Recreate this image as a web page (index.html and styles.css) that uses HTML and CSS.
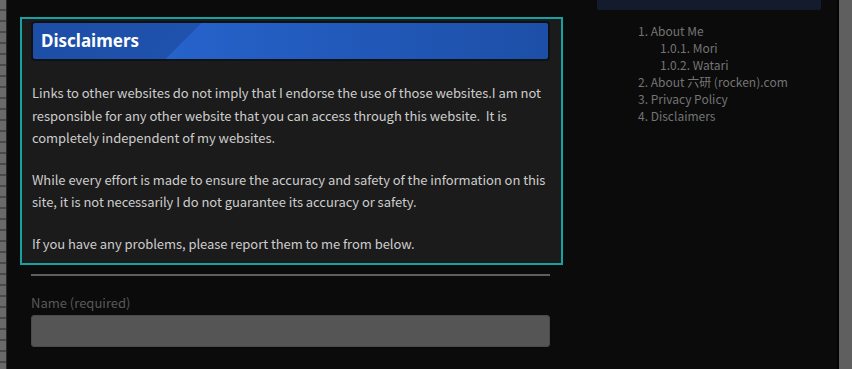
FILE: index.html
```html
<!DOCTYPE html>
<html lang="en">
<head>
  <meta charset="UTF-8" />
  <meta name="viewport" content="width=device-width, initial-scale=1.0" />
  <title>Disclaimers</title>
  <link rel="stylesheet" href="styles.css">
</head>
<body>
  <div class="edge-left"></div>
  <div class="main">
    <section class="notice">
      <h2 class="notice-title">Disclaimers</h2>
      <p>Links to other websites do not imply that I endorse the use of those websites.I am not responsible for any other website that you can access through this website.&nbsp; It is completely independent of my websites.</p>
      <p>While every effort is made to ensure the accuracy and safety of the information on this site, it is not necessarily I do not guarantee its accuracy or safety.</p>
      <p>If you have any problems, please report them to me from below.</p>
    </section>
    <div class="comment-form">
      <hr />
      <label for="author">Name (required)</label>
      <input type="text" id="author" />
    </div>
  </div>
  <div class="sidebar">
    <div class="widget-end"></div>
    <ol class="toc">
      <li>1. About Me
        <ol>
          <li>1.0.1. Mori</li>
          <li>1.0.2. Watari</li>
        </ol>
      </li>
      <li>2. About 六研 (rocken).com</li>
      <li>3. Privacy Policy</li>
      <li>4. Disclaimers</li>
    </ol>
  </div>
  <div class="edge-right"></div>
</body>
</html>
```

FILE: styles.css
```css
html, body {
  height: 100%;
}
body {
  margin: 0;
  background: #0b0b0b;
  font-family: "Noto Sans CJK JP", "Noto Sans", sans-serif;
  display: flex;
  overflow: hidden;
}
.edge-left {
  width: 6px;
  flex-shrink: 0;
  background: repeating-linear-gradient(to bottom, #6a6a6a 0, #6a6a6a 9px, #4a4a4a 9px, #4a4a4a 11px);
  border-right: 1px solid #2a2a2a;
}
.main {
  width: 543px;
  flex-shrink: 0;
  padding: 17px 0 0 13px;
}
.notice {
  background: #1b1b1b;
  border: 2px solid #17a2a2;
  padding: 2px 11px 8px 9px;
  color: #cdcdcd;
  font-size: 13px;
  line-height: 22.5px;
  letter-spacing: -0.05px;
}
.notice-title {
  margin: 0 0 21px;
  height: 36px;
  line-height: 35px;
  padding: 0 8px;
  font-size: 17px;
  font-weight: bold;
  color: #fff;
  letter-spacing: 0;
  border: 2px solid #0e1116;
  border-radius: 4px;
  font-family: "Noto Sans", sans-serif;
  background:
    linear-gradient(135deg, #1d4ea6 0, #1f52ad 119px, transparent 119px),
    linear-gradient(90deg, #2869d6 0, #245fc4 40%, #1d4fa7 100%);
}
.notice p {
  margin: 0 0 19px;
  padding-left: 1px;
}
.notice p:last-child {
  margin-bottom: 0;
}
.comment-form {
  padding: 0 13px 0 11px;
}
.comment-form hr {
  border: none;
  border-top: 2px solid #5e5e5e;
  margin: 9px 0 18px;
}
.comment-form label {
  display: block;
  color: #595959;
  font-size: 13px;
  line-height: 18px;
  margin-bottom: 3px;
}
.comment-form input {
  display: block;
  width: 100%;
  box-sizing: border-box;
  height: 32px;
  border: 1px solid #4a4a4a;
  border-radius: 3px;
  background: #555;
}
.sidebar {
  width: 224px;
  flex-shrink: 0;
  margin-left: 34px;
}
.widget-end {
  height: 10px;
  background: #141b2c;
  border-radius: 0 0 2px 2px;
}
.toc {
  list-style: none;
  margin: 12px 0 0;
  padding: 0 0 0 41px;
  font-size: 12px;
  line-height: 17px;
  color: #747474;
}
.toc ol {
  list-style: none;
  margin: 0;
  padding-left: 22px;
}
.edge-right {
  margin-left: auto;
  width: 13px;
  flex-shrink: 0;
  background: #5f5f5f;
  border-left: 2px solid #050505;
}
```
